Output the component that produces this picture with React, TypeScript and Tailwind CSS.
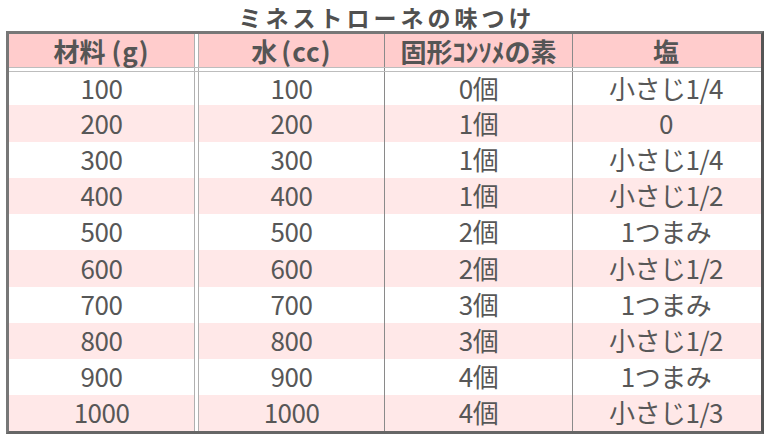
import React from "react";

const rows: [string, string, string, string][] = [
  ["100", "100", "0個", "小さじ1/4"],
  ["200", "200", "1個", "0"],
  ["300", "300", "1個", "小さじ1/4"],
  ["400", "400", "1個", "小さじ1/2"],
  ["500", "500", "2個", "1つまみ"],
  ["600", "600", "2個", "小さじ1/2"],
  ["700", "700", "3個", "1つまみ"],
  ["800", "800", "3個", "小さじ1/2"],
  ["900", "900", "4個", "1つまみ"],
  ["1000", "1000", "4個", "小さじ1/3"],
];

const heights = [
  "h-[33px]",
  "h-[37px]",
  "h-[36px]",
  "h-[36px]",
  "h-[36px]",
  "h-[37px]",
  "h-[36px]",
  "h-[36px]",
  "h-[36px]",
  "h-[36px]",
];

function Row({
  cells,
  className,
  cellClass,
}: {
  cells: React.ReactNode[];
  className: string;
  cellClass: string;
}) {
  return (
    <div className={`flex ${className}`}>
      <div className={`w-[185px] flex items-center justify-center ${cellClass}`}>{cells[0]}</div>
      <div className="w-[5px] border-x border-[#b0b0b0] bg-white"></div>
      <div className={`w-[186px] border-r border-[#8a8a8a] flex items-center justify-center ${cellClass}`}>{cells[1]}</div>
      <div className={`w-[188px] border-r border-[#8a8a8a] flex items-center justify-center ${cellClass}`}>{cells[2]}</div>
      <div className={`w-[186px] flex items-center justify-center ${cellClass}`}>{cells[3]}</div>
    </div>
  );
}

export default function App() {
  return (
    <div
      className="w-[771px] h-[439px] bg-white text-[#575757]"
      style={{ fontFamily: '"Noto Sans CJK JP", "Noto Sans", sans-serif' }}
    >
      <div className="h-[31px] flex items-center justify-center pl-[3px] pt-[3px] text-[23px] font-bold tracking-[4px] leading-[28px] text-[#505050]">
        ミネストローネの味つけ
      </div>
      <div className="ml-[6px] w-[758px] border-t-[3px] border-l-[3px] border-[#777777] border-r-[3px] border-r-[#555555] border-b-[3px] border-b-[#666666]">
        <Row
          cells={[
            <span>
              材料<span className="ml-[6px] tracking-[1px]">(g)</span>
            </span>,
            <span>
              水<span className="ml-[4px] tracking-[1px]">(cc)</span>
            </span>,
            "固形ｺﾝｿﾒの素",
            "塩",
          ]}
          className="h-[33px] bg-[#ffcccc]"
          cellClass="text-[26px] font-bold leading-[33px] text-[#555]"
        />
        <div className="h-[5px] border-y border-[#bdbdbd] bg-white flex">
          <div className="w-[185px]"></div>
          <div className="w-[5px] border-x border-[#b0b0b0]"></div>
          <div className="w-[186px] border-r border-[#8a8a8a]"></div>
          <div className="w-[188px] border-r border-[#8a8a8a]"></div>
          <div className="w-[186px]"></div>
        </div>
        {rows.map((r, i) => (
          <Row
            key={i}
            cells={r}
            className={`${heights[i]} ${i % 2 === 1 ? "bg-[#ffe8e8]" : "bg-white"}`}
            cellClass="text-[26px] leading-none tracking-[-0.5px] pb-[2px]"
          />
        ))}
      </div>
    </div>
  );
}
